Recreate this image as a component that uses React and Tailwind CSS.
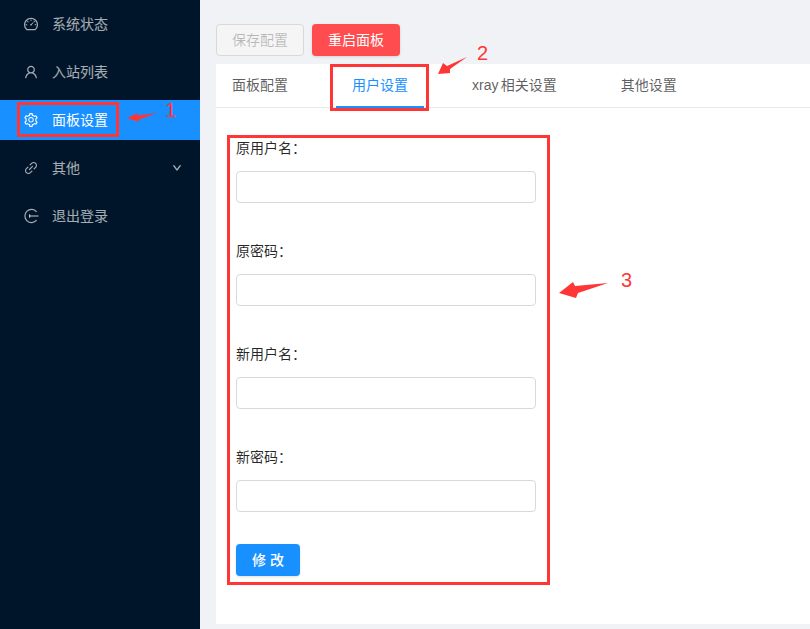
import { AiOutlineDashboard, AiOutlineUser, AiOutlineSetting, AiOutlineLink, AiOutlineDown } from "react-icons/ai";

const LogoutIcon = ({ className }) => (
  <svg viewBox="0 0 16 16" fill="none" stroke="currentColor" strokeWidth="1.2" className={className}>
    <path d="M13.6 3.8A6.6 6.6 0 1 0 13.6 12.2" />
    <path d="M6 8h9.5" />
    <path d="M6.6 6.2v3.6" />
  </svg>
);

const menuItems = [
  { label: "系统状态", icon: AiOutlineDashboard },
  { label: "入站列表", icon: AiOutlineUser },
  { label: "面板设置", icon: AiOutlineSetting, active: true },
  { label: "其他", icon: AiOutlineLink, arrow: true },
  { label: "退出登录", icon: LogoutIcon },
];

const tabs = [
  { label: "面板配置" },
  { label: "用户设置", active: true },
  { label: "xray 相关设置" },
  { label: "其他设置" },
];

const fields = ["原用户名", "原密码", "新用户名", "新密码"];

const App = () => {
  return (
    <div className="relative flex h-[629px] w-[810px] overflow-hidden bg-[#f0f2f5] font-['Liberation_Sans','Noto_Sans_CJK_SC',sans-serif] text-sm">
      <aside className="w-[200px] shrink-0 bg-[#001529] pt-1">
        {menuItems.map((item) => {
          const Icon = item.icon;
          return (
            <div
              key={item.label}
              className={`mb-2 flex h-10 items-center pl-[23px] pr-[18px] ${
                item.active ? "bg-[#1890ff] text-white" : "text-white/65"
              }`}
            >
              <Icon className="mr-[13px] h-4 w-4" />
              <span className="flex-1">{item.label}</span>
              {item.arrow && <AiOutlineDown className="h-[10px] w-[10px] stroke-[60]" />}
            </div>
          );
        })}
      </aside>

      <main className="flex flex-1 flex-col pl-4 pb-[5px] pt-6">
        <div className="flex gap-2">
          <button className="h-8 w-[88px] rounded border border-[#d9d9d9] bg-[#f5f5f5] text-black/25">
            保存配置
          </button>
          <button className="h-8 w-[88px] rounded bg-[#ff4d4f] text-white shadow-sm">
            重启面板
          </button>
        </div>

        <div className="mt-2 flex-1 bg-white">
          <div className="flex h-11 gap-8 border-b border-[#e8e8e8]">
            {tabs.map((tab) => (
              <div
                key={tab.label}
                className={`-mb-px flex h-11 items-center border-b-2 px-4 [word-spacing:-1.5px] ${
                  tab.active ? "border-[#1890ff] text-[#1890ff]" : "border-transparent text-black/65"
                }`}
              >
                {tab.label}
              </div>
            ))}
          </div>

          <form className="px-5 pt-[30px]">
            <div className="mb-8 flex w-[300px] flex-col gap-[38px]">
              {fields.map((name) => (
                <div key={name}>
                  <label className="block h-[23px] leading-[20px] text-black/85">{name}：</label>
                  <div className="mt-[10px] h-8 rounded border border-[#d9d9d9] bg-white" />
                </div>
              ))}
            </div>
            <button
              type="button"
              className="h-8 w-16 rounded bg-[#1890ff] font-medium text-white shadow-sm"
            >
              修 改
            </button>
          </form>
        </div>
      </main>

      {/* annotations on top of the screenshot */}
      <div className="absolute left-[17px] top-[102px] h-[35px] w-[102px] border-[3px] border-[#ff3636]" />
      <div className="absolute left-[330px] top-[64px] h-[47px] w-[99px] border-[3px] border-[#ff3636]" />
      <div className="absolute left-[227px] top-[135px] h-[450px] w-[323px] border-[3px] border-[#ff3636]" />
      <svg className="absolute left-0 top-0 h-[629px] w-[810px]" viewBox="0 0 810 629" fill="#ff3636">
        <path d="M127 118L138 113L137 115.5L157 113L138 120L139 122Z" />
        <path d="M438 74L443 63L447 66L467 57L450 69L450 73Z" />
        <path d="M559 293L573 282L575 286L608 283L578 293L576 298Z" />
      </svg>
      <span className="absolute left-[165px] top-[98px] text-xl leading-6 text-[#ff3636]">1</span>
      <span className="absolute left-[477px] top-[41px] text-xl leading-6 text-[#ff3636]">2</span>
      <span className="absolute left-[621px] top-[268px] text-xl leading-6 text-[#ff3636]">3</span>
    </div>
  );
};

export default App;
